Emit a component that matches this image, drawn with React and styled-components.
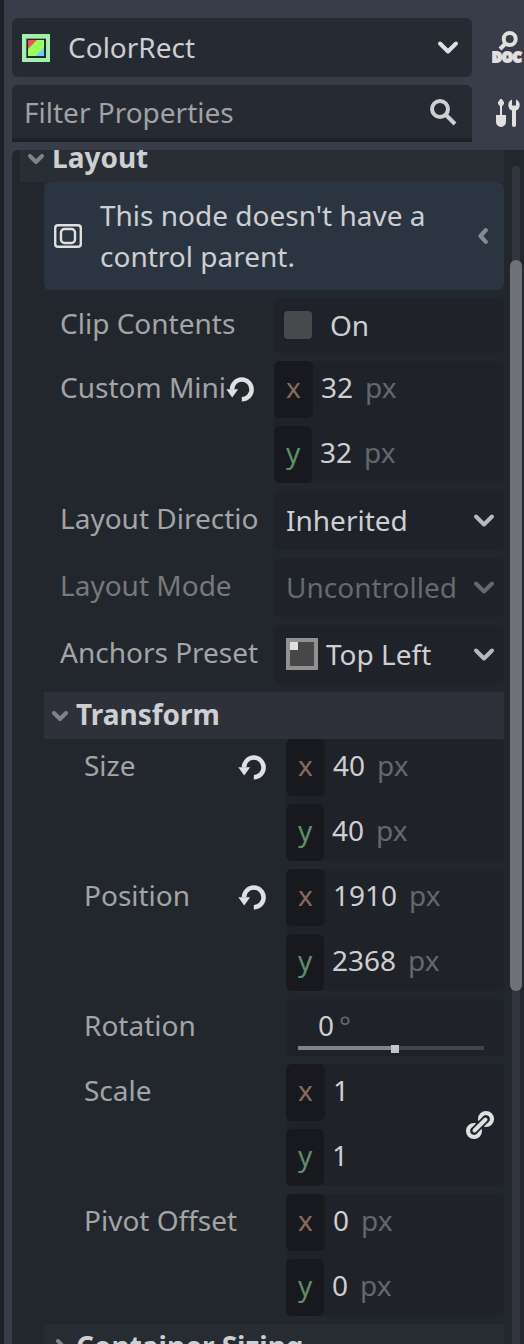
import React from 'react';
import styled, { createGlobalStyle } from 'styled-components';

const GlobalStyle = createGlobalStyle`
  * { box-sizing: border-box; }
  body { margin: 0; background: #373d49; overflow: hidden; }
`;

const Dock = styled.div`
  height: 1344px;
  overflow: hidden;
  display: flex;
  flex-direction: column;
  background: #383d49;
  border-left: 4px solid #1f2229;
  padding: 18px 0 0 8px;
  font: 28px/38px "Noto Sans", sans-serif;
  color: #cdcfd2;
  white-space: pre;
`;

const ToolRow = styled.div`
  display: flex;
  gap: 20px;
  margin-bottom: 8px;
  flex: none;
`;

const NodePicker = styled.div`
  width: 460px;
  height: 59px;
  flex: none;
  display: flex;
  align-items: flex-start;
  padding: 10px 12px 0 10px;
  border-radius: 6px;
  background: #262a32;
`;

const PickerName = styled.span`
  flex: 1;
  margin-left: 18px;
`;

const FilterField = styled.div`
  width: 460px;
  height: 57px;
  flex: none;
  display: flex;
  align-items: flex-start;
  padding: 8px 14px 0 12px;
  border-radius: 6px 6px 0 0;
  border-bottom: 4px solid #1f2128;
  background: #262a32;
  color: #a0a2a5;
`;

const Grow = styled.span`
  flex: 1;
`;

const PresetName = styled.span`
  flex: 1;
  margin-left: 8px;
`;

const Icon = styled.svg`
  display: block;
  flex: none;
  margin-top: ${(p) => p.$top || 0}px;
`;

const Body = styled.div`
  flex: 1;
  min-height: 0;
  display: flex;
  justify-content: space-between;
  padding-left: 8px;
  border-top-left-radius: 6px;
  background: #22272e;
  overflow: hidden;
`;

const Properties = styled.div`
  width: 484px;
  margin-top: -15px;
  flex: none;
  display: flex;
  flex-direction: column;
`;

const SectionBar = styled.div`
  height: 47px;
  flex: none;
  display: flex;
  align-items: flex-start;
  gap: 8px;
  padding: 3px 0 0 8px;
  margin-left: ${(p) => p.$indent || 0}px;
  margin-top: ${(p) => p.$gap || 0}px;
  background: ${(p) => p.$tone};
  font-weight: 700;
`;

const Notice = styled.div`
  height: 108px;
  flex: none;
  margin-left: 24px;
  padding: 13px 14px 0 10px;
  display: flex;
  border-radius: 6px;
  background: #2b3541;
  line-height: 41px;
`;

const NoticeText = styled.span`
  flex: 1;
  margin-left: 18px;
`;

const Rows = styled.div`
  display: flex;
  flex-direction: column;
  gap: 8px;
  margin-left: ${(p) => p.$indent}px;
  padding-top: ${(p) => p.$top || 0}px;
  flex: none;
`;

const Row = styled.div`
  display: flex;
`;

const LabelCell = styled.div`
  width: ${(p) => p.$width}px;
  flex: none;
  display: flex;
  align-items: flex-start;
  justify-content: space-between;
  padding: ${(p) => p.$top}px 16px 0 0;
  color: ${(p) => (p.$dim ? '#77797b' : '#a2a4a6')};
`;

const LabelText = styled.span`
  min-width: 0;
  overflow: hidden;
`;

const Field = styled.div`
  flex: 1;
  display: flex;
  align-items: flex-start;
  height: ${(p) => p.$height}px;
  padding: ${(p) => p.$pad};
  border-radius: 6px;
  background: #1f2229;
  color: ${(p) => (p.$dim ? '#66696d' : '#cdcfd2')};
`;

const CheckBox = styled.span`
  width: 28px;
  height: 28px;
  margin: 5px 18px 0 0;
  border-radius: 4px;
  background: #47494d;
`;

const VectorField = styled.div`
  flex: 1;
  display: flex;
  align-items: center;
  height: 122px;
  padding-right: 8px;
  border-radius: 6px;
  background: #1f2229;
`;

const Axes = styled.div`
  flex: 1;
  display: flex;
  flex-direction: column;
  gap: 8px;
`;

const AxisLine = styled.div`
  height: 57px;
  display: flex;
`;

const AxisTag = styled.span`
  width: ${(p) => (p.$axis === 'x' ? 39 : 38)}px;
  padding: 7px 0 0 12px;
  margin-right: 8px;
  border-radius: 6px;
  background: #18191e;
  color: ${(p) => (p.$axis === 'x' ? '#8a6a5e' : '#5e8f6c')};
`;

const Amount = styled.span`
  padding-top: 7px;
`;

const Unit = styled.span`
  padding-top: 7px;
  margin-left: 12px;
  color: #64676b;
`;

const AngleField = styled.div`
  flex: 1;
  height: 57px;
  padding: 7px 20px 0 12px;
  display: flex;
  flex-direction: column;
  border-radius: 6px;
  background: #1f2229;
`;

const AngleValue = styled.div`
  padding-left: 20px;
  height: 38px;
`;

const Degree = styled.span`
  margin-left: 5px;
  color: #64676b;
`;

const Slider = styled.div`
  display: flex;
  align-items: flex-start;
  height: 8px;
  margin-top: 1px;
`;

const SliderPart = styled.span`
  height: 4px;
  margin-top: 1px;
  width: ${(p) => p.$width}px;
  background: ${(p) => p.$tone};
`;

const SliderKnob = styled.span`
  width: 8px;
  height: 8px;
  background: #c3c4c8;
`;

const ScrollTrack = styled.div`
  width: 8px;
  height: 1200px;
  margin: 16px 4px 0 0;
  border-radius: 4px 4px 0 0;
  background: #33363e;
`;

const ScrollThumb = styled.div`
  width: 12px;
  height: 731px;
  margin: 94px 0 0 -2px;
  border-radius: 6px;
  background: #717276;
`;

const Caret = ({ color = '#b6b8bb', top = 12 }) => (
  <Icon width="24" height="16" viewBox="0 0 24 16" $top={top} fill="none" stroke={color} strokeWidth="4" strokeLinecap="round" strokeLinejoin="round">
    <path d="M4 3.500l8 8 8-8" />
  </Icon>
);

const FoldArrow = ({ closed }) => (
  <Icon width="16" height="16" $top={closed ? 12 : 16} viewBox="0 0 16 16" fill="none" stroke="#7f8286" strokeWidth="4" strokeLinecap="round" strokeLinejoin="round">
    <path d={closed ? 'M6 2l6 6-6 6' : 'M2 2l6 6 6-6'} />
  </Icon>
);

const Revert = () => (
  <Icon width="32" height="26" $top={9} viewBox="0 0 32 26">
    <path d="M6 12.400a9.800 9.800 0 1 1 9.800 9.800" fill="none" stroke="#e0e0e0" strokeWidth="4.500" />
    <path d="M0.300 12.200h11.800l-5.900 8.200z" fill="#e0e0e0" />
  </Icon>
);

const ColorRectIcon = () => (
  <Icon width="28" height="28" viewBox="0 0 28 28" $top={5.5}>
    <path fill="#a5efac" d="M0 0h28v28H0z" />
    <path fill="#72a67a" d="M4 4h20v20H4z" />
    <path fill="#252830" d="M4.500 5h19.500v19H4.500z" />
    <path fill="#9dff5c" d="M6 6h16v16H6z" />
    <path fill="#f0524f" d="M6 6h9L6 15z" />
    <path fill="#6cd0ff" d="M22 13.500v8.500h-8.500z" />
  </Icon>
);

const SearchIcon = () => (
  <Icon width="28" height="28" viewBox="0 0 28 28" $top={6} fill="none" stroke="#cdcfd2" strokeWidth="4">
    <circle cx="10" cy="10" r="8" />
    <path d="M16 16l9 9" />
  </Icon>
);

const DocIcon = () => (
  <Icon width="32" height="34" viewBox="0 0 32 34" $top={12}>
    <g fill="none" stroke="#e0e0e0" strokeWidth="4">
      <circle cx="17.700" cy="9" r="6" />
      <path d="M13.500 13.500l-5.500 5.500" />
    </g>
    <text x="0" y="31.900" textLength="29.500" lengthAdjust="spacingAndGlyphs" fontFamily="Noto Sans, sans-serif" fontWeight="900" fontSize="14.500" fill="#e0e0e0" stroke="#e0e0e0" strokeWidth="1.900">DOC</text>
  </Icon>
);

const ToolsIcon = () => (
  <Icon width="32" height="32" viewBox="0 0 32 32" $top={12} fill="#e0e0e0">
    <path d="M8.200 2h1.600l2.200 3.200v1.600L10 9.500V18h4v7a5 5 0 0 1-10 0v-7h4V9.500L6 6.800V5.200z" />
    <path d="M20 2.400V8.500h4V2.400a6 6 0 0 1 0 11.100V28a2 2 0 0 1-4 0V13.500a6 6 0 0 1 0-11.100z" />
  </Icon>
);

const ContainerIcon = () => (
  <Icon width="28" height="24" viewBox="0 0 28 24" $top={29} fill="none" stroke="#e0e0e0" strokeWidth="2.400">
    <rect x="1.200" y="1.200" width="25.600" height="21.600" rx="2.800" />
    <rect x="7" y="5" width="14" height="14" rx="3.500" />
  </Icon>
);

const NoticeArrow = () => (
  <Icon width="12" height="16" viewBox="0 0 12 16" $top={33} fill="none" stroke="#858b92" strokeWidth="4.200" strokeLinecap="round" strokeLinejoin="round">
    <path d="M7.800 2.200L2.500 8l5.300 5.800" />
  </Icon>
);

const AnchorIcon = () => (
  <Icon width="32" height="32" viewBox="0 0 32 32" $top={3}>
    <path fill="#919191" d="M0 0h32v32H0z" />
    <path fill="#474747" d="M4 4h24v24H4z" />
    <path fill="#e0e0e0" d="M4 4h8v8H4z" />
  </Icon>
);

const LinkIcon = () => (
  <Icon width="32" height="32" viewBox="0 0 32 32" fill="none" strokeLinecap="round">
    <g stroke="#e0e0e0" strokeWidth="4.300">
      <circle cx="22" cy="10" r="5.900" />
      <circle cx="10" cy="22" r="5.900" />
    </g>
    <path d="M10.500 21.500l11-11" stroke="#1f2229" strokeWidth="7.600" />
    <path d="M10.500 21.500l11-11" stroke="#e0e0e0" strokeWidth="4" />
  </Icon>
);

const Label = ({ text, width = 214, top = 7, dim, revert }) => (
  <LabelCell $width={width} $top={top} $dim={dim}>
    <LabelText>{text}</LabelText>
    {revert && <Revert />}
  </LabelCell>
);

const Vector = ({ x, y, unit, linked }) => (
  <VectorField>
    <Axes>
      {[['x', x], ['y', y]].map(([axis, value]) => (
        <AxisLine key={axis}>
          <AxisTag $axis={axis}>{axis}</AxisTag>
          <Amount>{value}</Amount>
          {unit && <Unit>{unit}</Unit>}
        </AxisLine>
      ))}
    </Axes>
    {linked && <LinkIcon />}
  </VectorField>
);

export default function App() {
  return (
    <>
      <GlobalStyle />
      <Dock>
        <ToolRow>
          <NodePicker>
            <ColorRectIcon />
            <PickerName>ColorRect</PickerName>
            <Caret color="#e0e0e0" />
          </NodePicker>
          <DocIcon />
        </ToolRow>
        <ToolRow>
          <FilterField>
            <Grow>Filter Properties</Grow>
            <SearchIcon />
          </FilterField>
          <ToolsIcon />
        </ToolRow>
        <Body>
          <Properties>
            <SectionBar $tone="#292d34"><FoldArrow />Layout</SectionBar>
            <Notice>
              <ContainerIcon />
              <NoticeText>{"This node doesn't have a\ncontrol parent."}</NoticeText>
              <NoticeArrow />
            </Notice>
            <Rows $indent={40} $top={8}>
              <Row>
                <Label text="Clip Contents" top={6} />
                <Field $height={55} $pad="8px 10px 0"><CheckBox />On</Field>
              </Row>
              <Row>
                <Label text="Custom Mini" revert />
                <Vector x="32" y="32" unit="px" />
              </Row>
              <Row>
                <Label text="Layout Directio" top={8} />
                <Field $height={59} $pad="10px 8px 0 12px"><Grow>Inherited</Grow><Caret /></Field>
              </Row>
              <Row>
                <Label text="Layout Mode" top={8} dim />
                <Field $height={59} $pad="10px 8px 0 12px" $dim><Grow>Uncontrolled</Grow><Caret color="#66696d" /></Field>
              </Row>
              <Row>
                <Label text="Anchors Preset" top={8} />
                <Field $height={59} $pad="10px 8px 0 12px"><AnchorIcon /><PresetName>Top Left</PresetName><Caret /></Field>
              </Row>
            </Rows>
            <SectionBar $indent={24} $gap={8} $tone="#2e3139"><FoldArrow />Transform</SectionBar>
            <Rows $indent={64}>
              <Row>
                <Label text="Size" width={202} revert />
                <Vector x="40" y="40" unit="px" />
              </Row>
              <Row>
                <Label text="Position" width={202} revert />
                <Vector x="1910" y="2368" unit="px" />
              </Row>
              <Row>
                <Label text="Rotation" width={202} />
                <AngleField>
                  <AngleValue>0<Degree>°</Degree></AngleValue>
                  <Slider>
                    <SliderPart $width={93} $tone="#828387" />
                    <SliderKnob />
                    <SliderPart $width={85} $tone="#434448" />
                  </Slider>
                </AngleField>
              </Row>
              <Row>
                <Label text="Scale" width={202} />
                <Vector x="1" y="1" linked />
              </Row>
              <Row>
                <Label text="Pivot Offset" width={202} />
                <Vector x="0" y="0" unit="px" />
              </Row>
            </Rows>
            <SectionBar $indent={24} $gap={8} $tone="#272b32"><FoldArrow closed />Container Sizing</SectionBar>
          </Properties>
          <ScrollTrack><ScrollThumb /></ScrollTrack>
        </Body>
      </Dock>
    </>
  );
}
